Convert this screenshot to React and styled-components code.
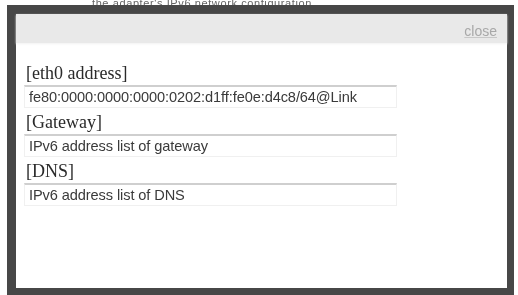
import React from 'react';
import styled, { createGlobalStyle } from 'styled-components';

const GlobalStyle = createGlobalStyle`
  html, body {
    margin: 0;
    padding: 0;
    background: #ffffff;
    overflow: hidden;
  }
`;

const Page = styled.div`
  width: 518px;
  height: 295px;
  background: #ffffff;
  overflow: hidden;
`;

const PeekText = styled.div`
  height: 5px;
  overflow: hidden;
  padding-left: 92px;
  font-family: "Liberation Sans", Arial, sans-serif;
  font-size: 11px;
  line-height: 7px;
  color: #666;
  letter-spacing: 0.6px;
  filter: blur(0.6px);
`;

const Frame = styled.div`
  margin-left: 7px;
  width: 507px;
  height: 290px;
  box-sizing: border-box;
  border: 9px solid #474747;
  border-right-width: 7px;
  border-bottom-width: 7px;
  background: #ffffff;
  display: flex;
  flex-direction: column;
  filter: blur(0.4px);
`;

const Header = styled.div`
  height: 29px;
  flex-shrink: 0;
  background: #e9e9e9;
  display: flex;
  align-items: center;
  justify-content: flex-end;
  padding-right: 10px;
  box-shadow: 0 1px 2px #f2f2f2;
`;

const Close = styled.a`
  font-family: "Liberation Sans", Arial, sans-serif;
  font-size: 14px;
  color: #a8a8a8;
  text-decoration: underline;
  text-decoration-color: #c8c8c8;
  margin-top: 4px;
`;

const Body = styled.div`
  padding: 16px 0 0 8px;
  display: flex;
  flex-direction: column;
`;

const Label = styled.div`
  height: 26px;
  padding-left: 2px;
  display: flex;
  align-items: flex-end;
  padding-bottom: 1px;
  box-sizing: border-box;
  font-family: "Liberation Serif", "Times New Roman", serif;
  font-size: 18px;
  color: #2a2a2a;
`;

const Field = styled.div`
  width: 373px;
  height: 23px;
  box-sizing: border-box;
  border-top: 2px solid #cfcfcf;
  border-left: 1px solid #f0f0f0;
  border-right: 1px solid #f0f0f0;
  border-bottom: 1px solid #f0f0f0;
  padding-left: 4px;
  display: flex;
  align-items: center;
  font-family: "Liberation Sans", Arial, sans-serif;
  font-size: 14.6px;
  letter-spacing: -0.1px;
  color: #3a3a3a;
  white-space: nowrap;
`;

const rows = [
  { label: '[eth0 address]', value: 'fe80:0000:0000:0000:0202:d1ff:fe0e:d4c8/64@Link' },
  { label: '[Gateway]', value: 'IPv6 address list of gateway' },
  { label: '[DNS]', value: 'IPv6 address list of DNS' },
];

const App = () => {
  return (
    <Page>
      <GlobalStyle />
      <PeekText>the adapter's IPv6 network configuration</PeekText>
      <Frame>
        <Header>
          <Close>close</Close>
        </Header>
        <Body>
          {rows.map(r => (
            <React.Fragment key={r.label}>
              <Label>{r.label}</Label>
              <Field>{r.value}</Field>
            </React.Fragment>
          ))}
        </Body>
      </Frame>
    </Page>
  );
};

export default App;
